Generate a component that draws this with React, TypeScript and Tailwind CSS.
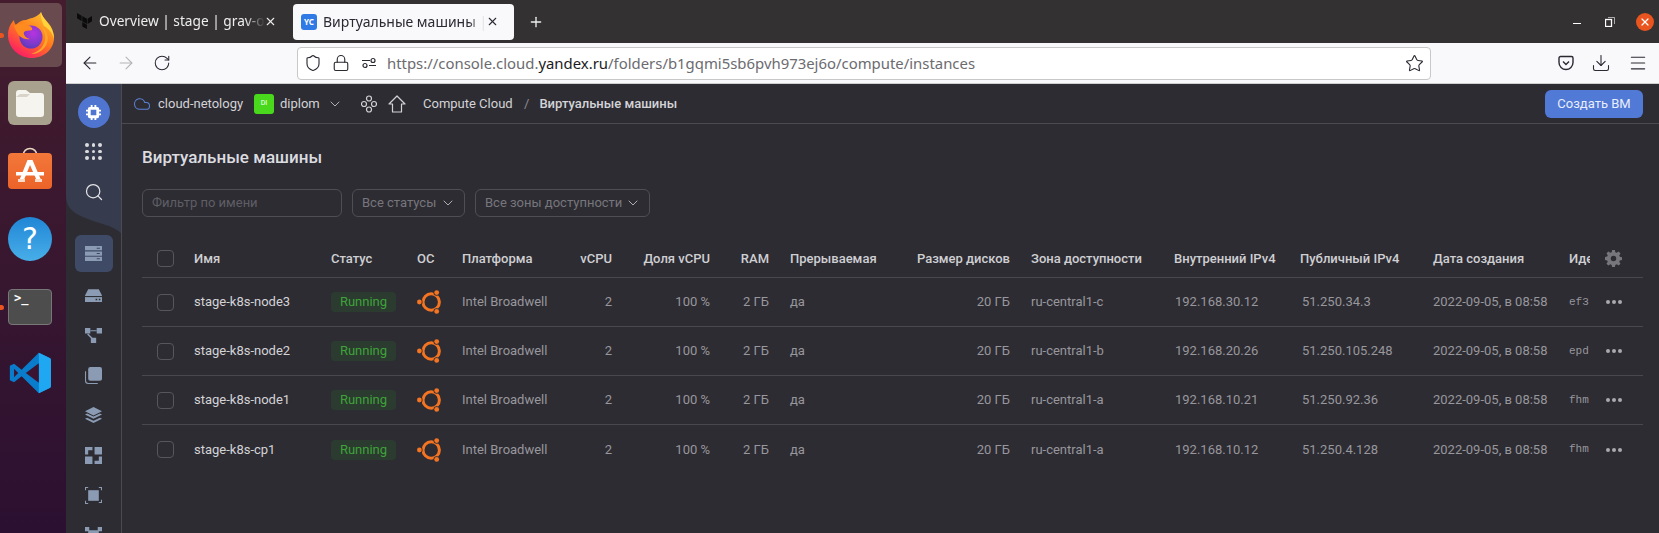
import React from "react";
import { ArrowLeft, ArrowRight, RotateCw, Shield, Lock, Star, Download, Menu, X, Plus, ChevronDown, Search, Cloud } from "lucide-react";

const browserFont = "font-['Noto_Sans',sans-serif]";
const GRID = "grid grid-cols-[52px_137px_86px_45px_108px_42px_98px_59px_131px_110px_164px_126px_133px_136px_21px_53px] items-center";

const rows = [
  { name: "stage-k8s-node3", zone: "ru-central1-c", ip: "192.168.30.12", pub: "51.250.34.3", id: "ef3" },
  { name: "stage-k8s-node2", zone: "ru-central1-b", ip: "192.168.20.26", pub: "51.250.105.248", id: "epd" },
  { name: "stage-k8s-node1", zone: "ru-central1-a", ip: "192.168.10.21", pub: "51.250.92.36", id: "fhm" },
  { name: "stage-k8s-cp1", zone: "ru-central1-a", ip: "192.168.10.12", pub: "51.250.4.128", id: "fhm" },
];

function Firefox() {
  return (
    <svg width="46" height="46" viewBox="0 0 46 46">
      <defs>
        <linearGradient id="ffbody" x1="0.8" y1="0.05" x2="0.2" y2="1">
          <stop offset="0" stopColor="#ffbd2e" />
          <stop offset="0.45" stopColor="#ff7a1c" />
          <stop offset="0.8" stopColor="#ff3750" />
          <stop offset="1" stopColor="#f5156c" />
        </linearGradient>
        <radialGradient id="ffglobe" cx="0.6" cy="0.35" r="0.8">
          <stop offset="0" stopColor="#b833e1" />
          <stop offset="0.6" stopColor="#7a3ac8" />
          <stop offset="1" stopColor="#4a3bb0" />
        </radialGradient>
      </defs>
      <path d="M33 0c1 5 5 8 8 12 4 5 5 10 5 14 0 11-10 20-22 20C11 46 0 36 0 23 0 16 3 11 6 8c0 2 1 4 2 5 2-3 6-5 10-5 5-2 12-3 15-8z" fill="url(#ffbody)" />
      <path d="M33 0c1 5 6 9 9 14 3 5 4 9 4 13-2-7-6-11-10-13-2-5-4-9-3-14z" fill="#ffd43a" />
      <circle cx="23" cy="25" r="11.5" fill="url(#ffglobe)" />
      <path d="M6 14c4-3 9-3 13-1 4 1 6 3 5 5-2 1-6 0-8 2-1 3 2 6 6 7-6 1-10-2-12-5-2-3-3-5-4-8z" fill="#ff8a1f" />
      <path d="M34 15c5 4 7 10 5 16-2 6-8 11-16 11 7-2 13-7 14-14 1-5-1-9-3-13z" fill="#ffa52b" />
    </svg>
  );
}

function Terraform() {
  return (
    <svg width="15" height="16" viewBox="0 0 15 16" className="shrink-0">
      <path d="M0 0l4.600 2.700v5.200L0 5.200zM5.300 3l4.600 2.700v5.200L5.300 8.300zM10.600 5.700L15 3v5.300l-4.400 2.600zM5.300 9.100l4.600 2.700V16l-4.600-2.600z" fill="#0b0b0b" />
    </svg>
  );
}

function Ubuntu() {
  return (
    <svg width="24" height="24" viewBox="0 0 24 24" className="shrink-0">
      <circle cx="14.200" cy="12" r="8.200" fill="none" stroke="#f47421" strokeWidth="3" />
      <circle cx="2.400" cy="12" r="3.200" fill="#2d2c33" />
      <circle cx="19.700" cy="2.600" r="3.200" fill="#2d2c33" />
      <circle cx="19.700" cy="21.400" r="3.200" fill="#2d2c33" />
      <circle cx="2.400" cy="12" r="2.400" fill="#f47421" />
      <circle cx="19.700" cy="2.600" r="2.400" fill="#f47421" />
      <circle cx="19.700" cy="21.400" r="2.400" fill="#f47421" />
    </svg>
  );
}

function Side({ children }: { children: React.ReactNode }) {
  return (
    <svg width="17" height="17" viewBox="0 0 16 16" fill="#8a9bb3">
      {children}
    </svg>
  );
}

function Dock() {
  return (
    <div className="relative flex h-full w-[66px] shrink-0 flex-col items-start bg-gradient-to-b from-[#441c2d] to-[#2c1031]">
      <div className="absolute left-0 top-[33px] h-[5px] w-[4px] rounded-r-full bg-[#e9541f]" />
      <div className="absolute left-0 top-[305px] h-[5px] w-[4px] rounded-r-full bg-[#e9541f]" />
      <div className="mt-[3px] flex h-[64px] w-[62px] items-center justify-center rounded-r-[5px] bg-[#694a4e]">
        <Firefox />
      </div>
      <div className="ml-[8px] mt-[14px] flex h-[44px] w-[44px] items-center justify-center rounded-[6px] bg-[#a8a18e]">
        <svg width="32" height="28" viewBox="0 0 32 28">
          <path d="M2 4a3 3 0 0 1 3-3h7l4 3h11a3 3 0 0 1 3 3v18a3 3 0 0 1-3 3H5a3 3 0 0 1-3-3z" fill="#f6f4ef" />
          <path d="M2 8h11l3-3H6z" fill="#d8d4ca" />
        </svg>
      </div>
      <div className="ml-[8px] mt-[22px]">
        <svg width="44" height="42" viewBox="0 0 44 42">
          <defs>
            <linearGradient id="store" x1="0" y1="0" x2="0" y2="1">
              <stop offset="0" stopColor="#f3783a" />
              <stop offset="1" stopColor="#ec6328" />
            </linearGradient>
          </defs>
          <path d="M15 9c0-10 14-10 14 0" fill="none" stroke="#e8d8c0" strokeWidth="1.500" />
          <rect x="0" y="6" width="44" height="36" rx="4" fill="url(#store)" />
          <path d="M19.500 13h5l9 21h-4.500L22 18l-6.500 16H11z" fill="#fff" />
          <rect x="8" y="25" width="28" height="3.500" fill="#fff" />
          <rect x="10" y="32" width="7" height="3" fill="#fbdccb" />
          <rect x="27" y="32" width="7" height="3" fill="#fbdccb" />
        </svg>
      </div>
      <div className="ml-[8px] mt-[28px] flex h-[44px] w-[44px] items-center justify-center rounded-full bg-gradient-to-b from-[#1f86d6] to-[#48aee8] font-['DejaVu_Sans',sans-serif] text-[30px] leading-none text-white">
        ?
      </div>
      <div className="ml-[8px] mt-[28px] h-[36px] w-[44px] rounded-[4px] border border-[#777] bg-[#4d4d4d] pl-[5px] pt-[1px] font-['DejaVu_Sans_Mono',monospace] text-[12px] font-bold leading-[14px] text-white">
        &gt;_
      </div>
      <div className="ml-[9px] mt-[27px]">
        <svg width="42" height="42" viewBox="0 0 100 100">
          <path d="M71 2l26 12.500a6 6 0 0 1 3 5.500v60a6 6 0 0 1-3 5.500L71 98 30 58 12 72 2 67V33l10-5 18 14z" fill="#0a7ccc" />
          <path d="M71 2l26 12.500a6 6 0 0 1 3 5.500v60a6 6 0 0 1-3 5.500L71 98z" fill="#1fa7f2" />
          <path d="M71 27L40 50l31 23z" fill="#3b1431" />
          <path d="M12 40l10 10-10 10z" fill="#3b1431" />
        </svg>
      </div>
    </div>
  );
}

function Browser() {
  return (
    <div className={browserFont}>
      <div className="flex h-[43px] items-center bg-[#333132] text-[14px] text-[#eeeeee]">
        <div className="flex w-[227px] items-center pl-[11px]">
          <Terraform />
          <span className="ml-[7px] w-[166px] overflow-hidden whitespace-nowrap text-[13.700px] [mask-image:linear-gradient(to_right,black_88%,transparent)]">Overview | stage | grav-or</span>
          <X size={13} className="-ml-[1px] shrink-0" />
        </div>
        <div className="flex h-[36px] w-[221px] items-center rounded-[4px] bg-[#f9f9fb] pl-[8px] text-[#2b2a33]">
          <div className="flex h-[16px] w-[16px] shrink-0 items-center justify-center rounded-[3px] bg-[#2f7ae5] text-[8px] font-bold text-white">YC</div>
          <span className="ml-[6px] w-[162px] overflow-hidden whitespace-nowrap [mask-image:linear-gradient(to_right,black_90%,transparent)]">Виртуальные машины | Y</span>
          <X size={13} className="ml-[1px] shrink-0" />
        </div>
        <Plus size={16} className="ml-[14px]" />
        <div className="ml-auto flex items-center pr-[5px]">
          <div className="mt-[3px] h-[1px] w-[8px] bg-white" />
          <svg width="10" height="10" viewBox="0 0 10 10" fill="none" stroke="#fff" className="ml-[24px]">
            <rect x="0.500" y="2.500" width="6" height="7" strokeWidth="1.300" />
            <path d="M3 0.500h6.500V7" strokeWidth="0.600" />
          </svg>
          <div className="ml-[21px] flex h-[18px] w-[18px] items-center justify-center rounded-full bg-[#e9541f]">
            <X size={12} color="#fff" strokeWidth={2.5} />
          </div>
        </div>
      </div>
      <div className="flex h-[41px] items-center border-b border-[#cfcfd0] bg-[#f9f9fb] text-[#2b2a33]">
        <ArrowLeft size={20} strokeWidth={1.3} className="ml-[14px]" />
        <ArrowRight size={20} strokeWidth={1.3} className="ml-[16px] text-[#b4b4b8]" />
        <RotateCw size={18} strokeWidth={1.4} className="ml-[17px]" />
        <div className="ml-[126px] flex h-[33px] w-[1134px] items-center rounded-[4px] border border-[#c8c8c8] bg-white text-[14.900px]">
          <Shield size={18} strokeWidth={1.5} className="ml-[6px]" />
          <Lock size={18} strokeWidth={1.5} className="ml-[10px]" />
          <svg width="16" height="16" viewBox="0 0 16 16" className="ml-[11px]" fill="none" stroke="#2b2a33" strokeWidth="1.200">
            <path d="M9 5.500h-8M15 10.500H8" />
            <circle cx="12" cy="5.500" r="2" />
            <circle cx="4" cy="10.500" r="2" />
          </svg>
          <span className="ml-[10px] whitespace-nowrap text-[#6b6b70]">
            https://console.cloud.<span className="text-[#1c1b22]">yandex.ru</span>/folders/b1gqmi5sb6pvh973ej6o/compute/instances
          </span>
          <Star size={19} strokeWidth={1.4} className="ml-auto mr-[6px]" />
        </div>
        <svg width="16" height="16" viewBox="0 0 16 16" fill="none" stroke="#2b2a33" strokeWidth="1.400" className="ml-[127px]">
          <path d="M2.500 1.500h11a1.500 1.500 0 0 1 1.500 1.500v4.500a7 7 0 0 1-14 0V3a1.500 1.500 0 0 1 1.500-1.500z" />
          <path d="M5 6.500l3 3 3-3" />
        </svg>
        <Download size={20} strokeWidth={1.3} className="ml-[17px]" />
        <Menu size={20} strokeWidth={1.3} className="ml-[17px]" />
      </div>
    </div>
  );
}

function Sidebar() {
  const tile = "flex h-[40px] w-full shrink-0 items-center justify-center";
  return (
    <div className="relative flex h-full w-[56px] shrink-0 flex-col items-center overflow-hidden border-r border-[#4a4a50]">
      <svg className="absolute left-0 top-0" width="55" height="150" viewBox="0 0 55 150" fill="#363b4d">
        <path d="M0 0H55V149C46 141 34 140 22 135C8 130 0 124 0 112Z" />
      </svg>
      <div className="relative mt-[12px] flex h-[32px] w-[32px] shrink-0 items-center justify-center rounded-full bg-[#4f75d1]">
        <svg width="15" height="15" viewBox="0 0 16 16" fill="#fff">
          <path fillRule="evenodd" d="M4 2h1V0h2v2h2V0h2v2h1a2 2 0 0 1 2 2v1h2v2h-2v2h2v2h-2v1a2 2 0 0 1-2 2h-1v2H9v-2H7v2H5v-2H4a2 2 0 0 1-2-2v-1H0V9h2V7H0V5h2V4a2 2 0 0 1 2-2zm1 3v6h6V5z" />
        </svg>
      </div>
      <div className="relative mt-[15px] grid h-[17px] w-[17px] shrink-0 grid-cols-3 gap-[3px]">
        {Array.from({ length: 9 }).map((_, i) => (
          <div key={i} className="h-[3.500px] w-[3.500px] rounded-full bg-[#dcdce0]" />
        ))}
      </div>
      <Search size={20} strokeWidth={1.500} color="#e4e4e8" className="relative mt-[22px] shrink-0" />
      <div className="relative mt-[33px] flex h-[37px] w-[38px] shrink-0 items-center justify-center rounded-[6px] bg-[#3f4a66]">
        <Side>
          <path d="M0 1h16v4H0zM0 6h16v4H0zM0 11h16v4H0z" />
          <path d="M11 2.500h3v1h-3zM11 7.500h3v1h-3zM11 12.500h3v1h-3z" fill="#3f4a66" />
        </Side>
      </div>
      <div className={`${tile} relative mt-[3px]`}>
        <Side>
          <path d="M3 2h10l3 6v6H0V8z" />
          <path d="M0 8.500h16v1H0z" fill="#2d2c33" />
          <path d="M10 11h1.500v1.500H10zM13 11h1.500v1.500H13z" fill="#2d2c33" />
        </Side>
      </div>
      <div className={tile}>
        <Side>
          <path d="M0 1h5v5H0zM11 1h5v5h-5zM5.500 10h5v5h-5z" />
          <path d="M5 3h6v1H5zM3 6l4 4-1 1-4-4z" />
        </Side>
      </div>
      <div className={tile}>
        <Side>
          <path d="M5 0h9a2 2 0 0 1 2 2v9a2 2 0 0 1-2 2H5a2 2 0 0 1-2-2V2a2 2 0 0 1 2-2z" />
          <path d="M1 4v9a2 2 0 0 0 2 2h9v1H3a3 3 0 0 1-3-3V4z" />
        </Side>
      </div>
      <div className={tile}>
        <Side>
          <path d="M8 0l8 4-8 4-8-4zM0 7l2-1 6 3 6-3 2 1-8 4zM0 11l2-1 6 3 6-3 2 1-8 4z" />
        </Side>
      </div>
      <div className={tile}>
        <Side>
          <path d="M0 9h7v7H0zM9 0h7v7H9zM0 0h7v3H3v4H0zM16 9v7H9v-3h4V9z" />
        </Side>
      </div>
      <div className={tile}>
        <Side>
          <path d="M3 3h10v10H3z" />
          <path d="M0 0h3v1H1v2H0zM13 14h2v-2h1v3h-3zM0 13h1v2h2v1H0zM13 0h3v3h-1V1h-2z" />
        </Side>
      </div>
      <div className={tile}>
        <Side>
          <path d="M0 0h4v3h8V0h4v4h-3v8h3v4h-4v-3H4v3H0v-4h3V4H0z" />
        </Side>
      </div>
    </div>
  );
}

function Select({ label, className }: { label: string; className: string }) {
  return (
    <div className={`flex h-[28px] items-center justify-between rounded-[6px] border border-[#4f4e55] pl-[9px] pr-[8px] text-[#77767c] ${className}`}>
      <span className="whitespace-nowrap">{label}</span>
      <ChevronDown size={16} strokeWidth={1.200} color="#d0d0d4" className="shrink-0" />
    </div>
  );
}

function Main() {
  return (
    <div className="flex min-w-0 flex-1 flex-col font-['Roboto',sans-serif] text-[13px]">
      <div className="flex h-[40px] shrink-0 items-center border-b border-[#4a4a50] pl-[11px] pr-[16px] text-[#d3d3d6]">
        <Cloud size={18} strokeWidth={1.400} color="#5c82d6" />
        <span className="ml-[7px] w-[88px] whitespace-nowrap">cloud-netology</span>
        <div className="ml-[8px] flex h-[20px] w-[20px] items-center justify-center rounded-[3px] bg-[#49d81c] text-[7px] text-white">DI</div>
        <span className="ml-[6px] w-[40px]">diplom</span>
        <ChevronDown size={16} strokeWidth={1.200} className="ml-[7px]" />
        <svg width="16" height="18" viewBox="0 0 16 18" fill="none" stroke="#d3d3d6" strokeWidth="1.200" className="ml-[18px]">
          <circle cx="8" cy="3.500" r="2.500" />
          <circle cx="8" cy="14.500" r="2.500" />
          <circle cx="3" cy="9" r="2.500" />
          <circle cx="13" cy="9" r="2.500" />
        </svg>
        <svg width="20" height="20" viewBox="0 0 20 20" fill="none" stroke="#d3d3d6" strokeWidth="1.200" className="ml-[10px]">
          <path d="M10 2L2 10h3.500v8h9v-8H18z" strokeLinejoin="round" />
        </svg>
        <span className="ml-[16px] w-[91px] whitespace-nowrap">Compute Cloud</span>
        <span className="ml-[10px] text-[#8e8d92]">/</span>
        <span className="ml-[10px] whitespace-nowrap font-medium">Виртуальные машины</span>
        <div className="ml-auto flex h-[28px] w-[98px] items-center justify-center rounded-[6px] bg-[#5179d6] text-[#e8eefb]">Создать ВМ</div>
      </div>
      <div className="flex flex-col pl-[20px] pr-[16px] pt-[21px]">
        <h1 className="h-[24px] text-[17px] font-medium leading-[24px] text-[#dcdce0]">Виртуальные машины</h1>
        <div className="mt-[20px] flex items-center gap-[10px]">
          <div className="flex h-[28px] w-[200px] items-center rounded-[6px] border border-[#4f4e55] pl-[9px] text-[#5f5e64]">Фильтр по имени</div>
          <Select label="Все статусы" className="w-[113px]" />
          <Select label="Все зоны доступности" className="w-[175px]" />
        </div>
        <div className={`${GRID} mt-[23px] h-[38px] border-b border-[#48484e] font-medium text-[#cfcfd2]`}>
          <div className="pl-[15px]">
            <div className="h-[17px] w-[17px] rounded-[4px] border border-[#57565c]" />
          </div>
          <div>Имя</div>
          <div>Статус</div>
          <div>ОС</div>
          <div>Платформа</div>
          <div className="text-right">vCPU</div>
          <div className="text-right">Доля vCPU</div>
          <div className="text-right">RAM</div>
          <div className="pl-[21px]">Прерываемая</div>
          <div className="whitespace-nowrap text-right">Размер дисков</div>
          <div className="whitespace-nowrap pl-[21px]">Зона доступности</div>
          <div className="whitespace-nowrap">Внутренний IPv4</div>
          <div className="whitespace-nowrap">Публичный IPv4</div>
          <div className="whitespace-nowrap">Дата создания</div>
          <div className="overflow-hidden whitespace-nowrap">Идентификатор</div>
          <div className="pl-[15px]">
            <svg width="17" height="17" viewBox="0 0 16 16" fill="#77767c">
              <path fillRule="evenodd" d="M6.700 0h2.600l.4 2.100 1.300.6 1.800-1.200 1.800 1.800-1.200 1.800.6 1.300 2 .4v2.600l-2 .4-.6 1.300 1.200 1.800-1.800 1.800-1.800-1.200-1.300.6-.4 2H6.700l-.4-2-1.300-.6-1.800 1.200-1.800-1.800 1.200-1.800-.6-1.300-2-.4V6.600l2-.4.6-1.300-1.200-1.800 1.800-1.800L5 2.700l1.300-.6zM8 5.400a2.600 2.600 0 1 0 0 5.200 2.600 2.600 0 0 0 0-5.200z" />
            </svg>
          </div>
        </div>
        {rows.map((r, i) => (
          <div key={r.name} className={`${GRID} h-[49px] text-[#98979c] ${i < 3 ? "border-b border-[#48484e]" : ""}`}>
            <div className="pl-[15px]">
              <div className="h-[17px] w-[17px] rounded-[4px] border border-[#57565c]" />
            </div>
            <div className="text-[#d3d3d6]">{r.name}</div>
            <div>
              <span className="flex h-[20px] w-[65px] items-center justify-center rounded-[4px] bg-[#2b3b2f] text-[#3fa33a]">Running</span>
            </div>
            <div><Ubuntu /></div>
            <div className="whitespace-nowrap">Intel Broadwell</div>
            <div className="text-right">2</div>
            <div className="text-right">100 %</div>
            <div className="text-right">2 ГБ</div>
            <div className="pl-[21px]">да</div>
            <div className="text-right">20 ГБ</div>
            <div className="pl-[21px]">{r.zone}</div>
            <div className="pl-[1px]">{r.ip}</div>
            <div className="pl-[2px]">{r.pub}</div>
            <div className="whitespace-nowrap">2022-09-05, в 08:58</div>
            <div className="overflow-hidden font-['Liberation_Mono',monospace] text-[11px]">{r.id}</div>
            <div className="flex gap-[2px] pl-[16px]">
              <div className="h-[4px] w-[4px] rounded-full bg-[#aaa9ae]" />
              <div className="h-[4px] w-[4px] rounded-full bg-[#aaa9ae]" />
              <div className="h-[4px] w-[4px] rounded-full bg-[#aaa9ae]" />
            </div>
          </div>
        ))}
      </div>
    </div>
  );
}

export default function App() {
  return (
    <div className="flex h-[533px] w-[1659px] overflow-hidden bg-[#2d2c33]">
      <Dock />
      <div className="flex min-w-0 flex-1 flex-col">
        <Browser />
        <div className="flex min-h-0 flex-1">
          <Sidebar />
          <Main />
        </div>
      </div>
    </div>
  );
}
